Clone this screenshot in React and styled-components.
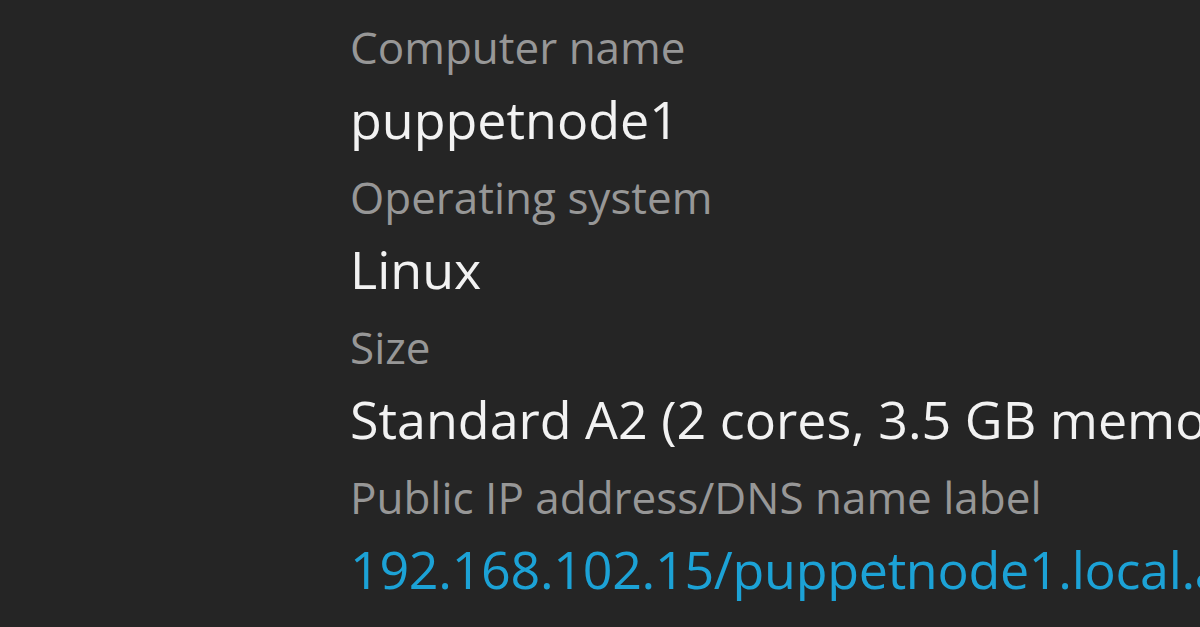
import React from 'react';
import styled, { createGlobalStyle } from 'styled-components';

const GlobalStyle = createGlobalStyle`
  html, body {
    margin: 0;
    padding: 0;
    background: #252525;
    overflow: hidden;
  }
  body {
    font-family: "Open Sans", "Noto Sans", sans-serif;
  }
`

const Panel = styled.div`
  width: 1200px;
  height: 627px;
  box-sizing: border-box;
  padding: 13px 0 0 350px;
  background: #252525;
  overflow: hidden;
`
const Field = styled.div`
  display: flex;
  flex-direction: column;
  padding-bottom: 6px;
  white-space: nowrap;
`
const Label = styled.div`
  height: 68px;
  line-height: 68px;
  font-size: 44px;
  color: #979797;
`
const Value = styled.div`
  height: 76px;
  line-height: 76px;
  font-size: 52px;
  color: ${p => (p.link ? '#1ca2d6' : '#f2f2f2')};
  letter-spacing: ${p => (p.link ? '-0.3px' : '0')};
`

const fields = [
  { label: 'Computer name', value: 'puppetnode1' },
  { label: 'Operating system', value: 'Linux' },
  { label: 'Size', value: 'Standard A2 (2 cores, 3.5 GB memory)' },
  { label: 'Public IP address/DNS name label', value: '192.168.102.15/puppetnode1.local.azure.com', link: true },
];

const App = () => (
  <Panel>
    <GlobalStyle />
    {fields.map(f => (
      <Field key={f.label}>
        <Label>{f.label}</Label>
        <Value link={f.link}>{f.value}</Value>
      </Field>
    ))}
  </Panel>
)

export default App;
